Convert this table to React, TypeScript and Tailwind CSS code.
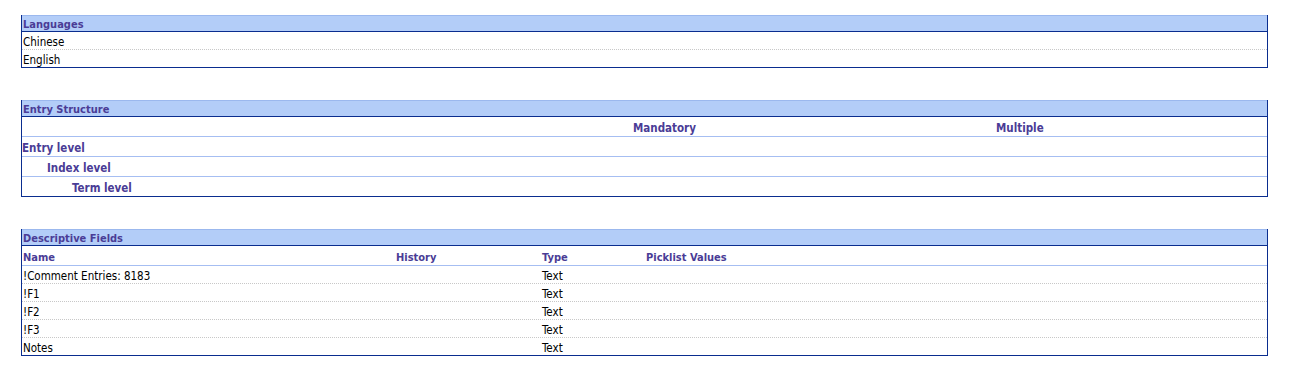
import type { ReactNode } from "react";

// Tahoma-like UI font; DejaVu Sans Condensed is the closest installed width.
const FONT = "font-['Tahoma','DejaVu_Sans_Condensed','DejaVu_Sans',sans-serif]";

function Section({ title, children }: { title: string; children: ReactNode }) {
  return (
    <div className="w-[1247px] border-x border-b border-[#0a2d8f]">
      <div className="h-[17px] border-t border-b border-t-[#9bb8ee] border-b-[#0a2d8f] bg-[#b3cdf8] pl-[1px] text-[11px] font-bold leading-[17px] text-[#4a3c96]">
        {title}
      </div>
      {children}
    </div>
  );
}

const languages = ["Chinese", "English"];

const levels = [
  { label: "Entry level", indent: "pl-0" },
  { label: "Index level", indent: "pl-[25px]" },
  { label: "Term level", indent: "pl-[50px]" },
];

const fields = [
  { name: "!Comment Entries: 8183", type: "Text" },
  { name: "!F1", type: "Text" },
  { name: "!F2", type: "Text" },
  { name: "!F3", type: "Text" },
  { name: "Notes", type: "Text" },
];

export default function App() {
  return (
    <div className={`${FONT} flex flex-col gap-[32px] pl-[21px] pt-[15px] text-black`}>
      <Section title="Languages">
        {languages.map((l, i) => (
          <div
            key={l}
            className={`pl-[1px] pt-[3px] text-[11.5px] leading-[15px] ${
              i < languages.length - 1
                ? "h-[18px] border-b border-dotted border-[#c8c8c8]"
                : "h-[17px]"
            }`}
          >
            {l}
          </div>
        ))}
      </Section>

      <Section title="Entry Structure">
        <div className="flex h-[20px] items-center border-b border-[#a6bef2] pt-[4px] text-[11.5px] font-bold text-[#4a3c96]">
          <div className="w-[611px]" />
          <div className="w-[363px]">Mandatory</div>
          <div>Multiple</div>
        </div>
        {levels.map((lv, i) => (
          <div
            key={lv.label}
            className={`flex items-center pt-[4px] text-[11.5px] font-bold text-[#4a3c96] ${lv.indent} ${
              i < levels.length - 1 ? "h-[20px] border-b border-[#a6bef2]" : "h-[19px]"
            }`}
          >
            {lv.label}
          </div>
        ))}
      </Section>

      <Section title="Descriptive Fields">
        <div className="flex h-[20px] items-center border-b border-[#a6bef2] pl-[1px] pt-[6px] text-[11px] font-bold text-[#4a3c96]">
          <div className="w-[373px]">Name</div>
          <div className="w-[146px]">History</div>
          <div className="w-[104px]">Type</div>
          <div>Picklist Values</div>
        </div>
        {fields.map((f, i) => (
          <div
            key={f.name}
            className={`flex pl-[1px] pt-[3px] text-[11.5px] leading-[15px] ${
              i < fields.length - 1
                ? "h-[18px] border-b border-dotted border-[#c8c8c8]"
                : "h-[17px]"
            }`}
          >
            <div className="w-[519px]">{f.name}</div>
            <div>{f.type}</div>
          </div>
        ))}
      </Section>
    </div>
  );
}
